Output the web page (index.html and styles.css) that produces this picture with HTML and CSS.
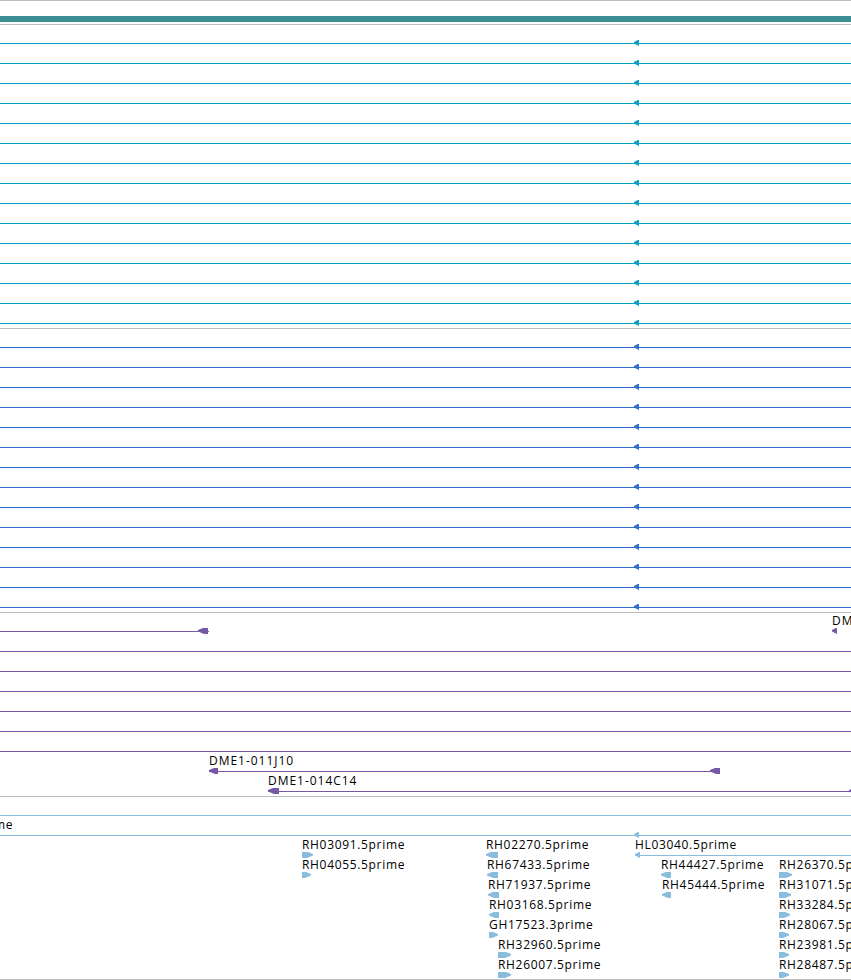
FILE: index.html
```html
<!DOCTYPE html>
<html lang="en">
<head>
  <meta charset="UTF-8">
  <title>Alignments</title>
  <link rel="stylesheet" href="styles.css">
</head>
<body>
  <div class="viewer" id="viewer">
    <div class="contig"></div>
  </div>
  <script src="tracks.js"></script>
</body>
</html>
```
FILE: styles.css
```css
body {
  margin: 0;
  background: #fff;
  overflow: hidden;
}
.viewer {
  width: 851px;
  height: 980px;
  overflow: hidden;
  border-top: 1px solid #bebebe;
  box-sizing: border-box;
}
.contig {
  height: 6px;
  margin: 15px 0 2px;
  background: #3d8e93;
}
.track {
  border-top: 1px solid #bebebe;
  padding-bottom: 3px;
}
.track.est {
  padding-bottom: 2px;
  border-bottom: 1px solid #bebebe;
}
.teal { color: #009fbf; }
.blue { color: #316dce; }
.bac { color: #7559a6; }
.est { color: #8abcdd; }
.row {
  position: relative;
  height: 20px;
}
/* features sit at their sequence coordinate inside the row */
.line {
  position: absolute;
  top: 18px;
  height: 1px;
  background: currentColor;
}
.arrow {
  position: absolute;
  top: 15px;
  height: 6px;
  fill: currentColor;
}
.label {
  position: absolute;
  top: 0;
  color: #000;
  font-family: "Open Sans", "Noto Sans", sans-serif;
  font-size: 12px;
  line-height: 16px;
  letter-spacing: 0.67px;
  white-space: nowrap;
}
.bac .label {
  letter-spacing: 0.97px;
}
```
FILE: tracks.js
```js
const END = 851;

// lines: [start, end], arrows: [start, end, direction], labels: [x, name]
const full = { lines: [[0, END]] };
const hit = { lines: [[0, END]], arrows: [[634, 639, "l"]] };

const tracks = [
  { name: "teal", rows: Array(15).fill(hit) },
  { name: "blue", rows: Array(14).fill(hit) },
  { name: "bac", rows: [
    { lines: [[0, 209]], arrows: [[198, 208, "l"], [832, 837, "l"]], labels: [[832, "DM"]] },
    full, full, full, full, full, full,
    { lines: [[209, 720]], arrows: [[209, 218, "l"], [710, 720, "l"]], labels: [[209, "DME1-011J10"]] },
    { lines: [[268, END]], arrows: [[268, 279, "l"], [849, 859, "l"]], labels: [[268, "DME1-014C14"]] }
  ] },
  { name: "est", rows: [
    full,
    { lines: [[0, END]], arrows: [[634, 639, "l"]], labels: [[-6, "me"]] },
    { lines: [[636, END]], arrows: [[302, 313, "r"], [486, 498, "l"], [635, 640, "l"]],
      labels: [[302, "RH03091.5prime"], [486, "RH02270.5prime"], [635, "HL03040.5prime"]] },
    { arrows: [[302, 311, "r"], [487, 498, "l"], [661, 671, "l"], [779, 792, "r"]],
      labels: [[302, "RH04055.5prime"], [487, "RH67433.5prime"], [661, "RH44427.5prime"], [779, "RH26370.5prime"]] },
    { arrows: [[488, 499, "l"], [662, 671, "l"], [779, 791, "r"]],
      labels: [[488, "RH71937.5prime"], [662, "RH45444.5prime"], [779, "RH31071.5prime"]] },
    { arrows: [[489, 499, "l"], [779, 790, "r"]],
      labels: [[489, "RH03168.5prime"], [779, "RH33284.5prime"]] },
    { arrows: [[489, 498, "r"], [779, 789, "r"]],
      labels: [[489, "GH17523.3prime"], [779, "RH28067.5prime"]] },
    { arrows: [[498, 511, "r"], [779, 789, "r"]],
      labels: [[498, "RH32960.5prime"], [779, "RH23981.5prime"]] },
    { arrows: [[498, 511, "r"], [779, 789, "r"]],
      labels: [[498, "RH26007.5prime"], [779, "RH28487.5prime"]] }
  ] }
];

function arrow([start, end, dir]) {
  const w = end - start;
  const h = Math.min(w, 6);
  const points = dir === "l"
    ? `${w},0 ${h - 1},0 0,2 0,3.5 ${h},6 ${w},6`
    : `0,0 ${w - h + 1},0 ${w},2 ${w},3.5 ${w - h},6 0,6`;
  return `<svg class="arrow" width="${w}" height="6" style="left:${start}px"><polygon points="${points}"/></svg>`;
}

function row({ lines = [], arrows = [], labels = [] }) {
  return '<div class="row">' +
    lines.map(([a, b]) => `<div class="line" style="left:${a}px;width:${b - a}px"></div>`).join("") +
    arrows.map(arrow).join("") +
    labels.map(([x, name]) => `<span class="label" style="left:${x}px">${name}</span>`).join("") +
    "</div>";
}

document.getElementById("viewer").insertAdjacentHTML("beforeend",
  tracks.map(t => `<div class="track ${t.name}">${t.rows.map(row).join("")}</div>`).join(""));
```
